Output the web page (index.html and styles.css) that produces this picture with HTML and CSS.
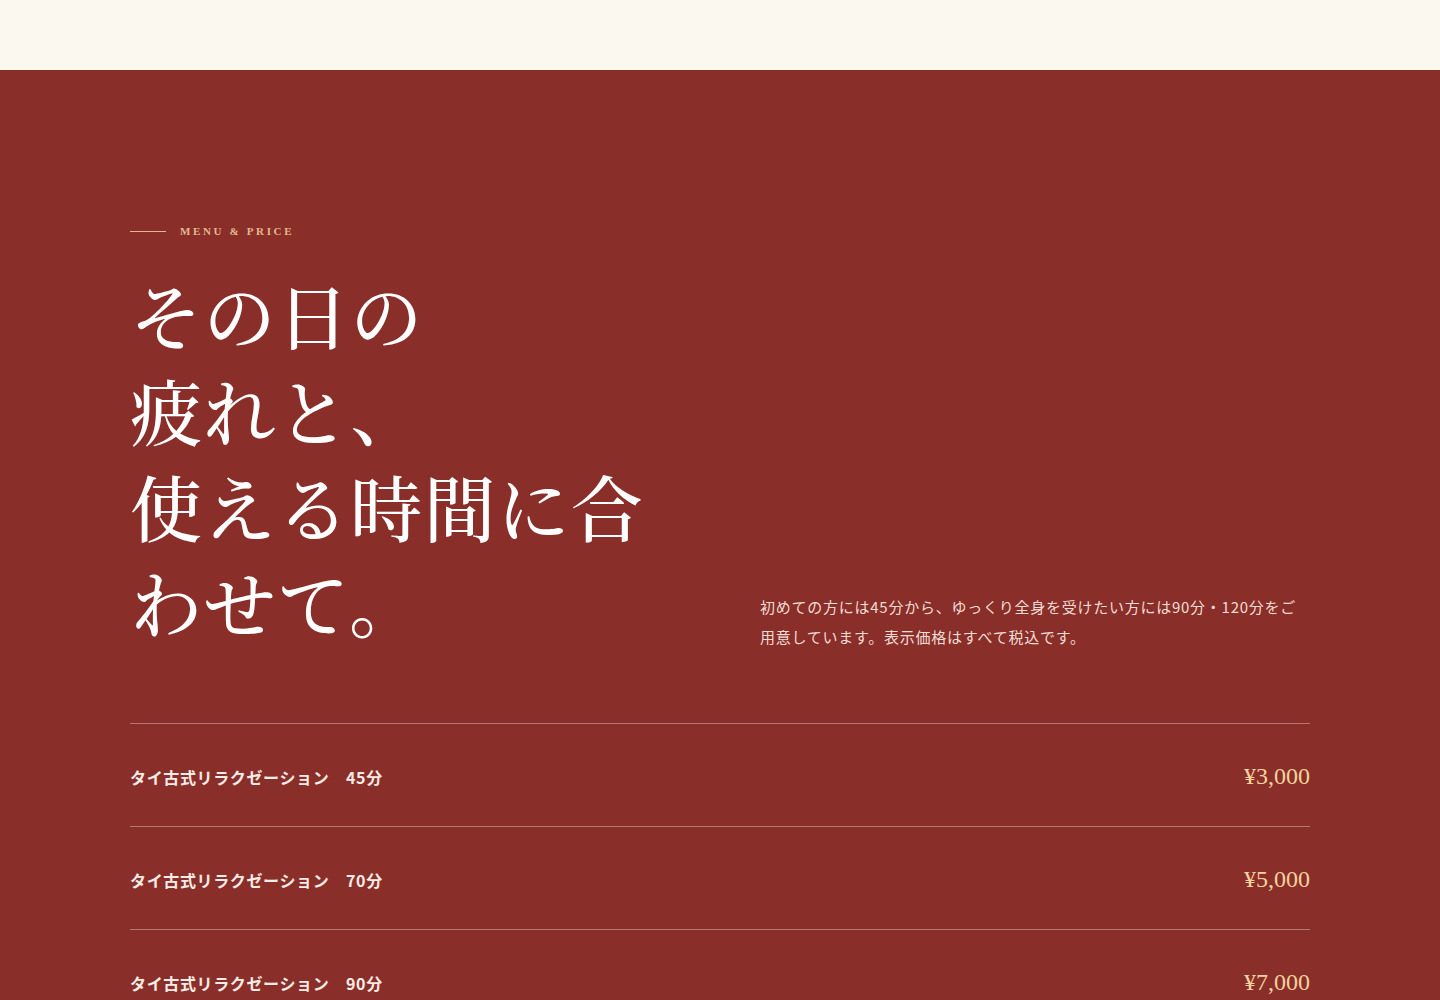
FILE: index.html
```html
<!DOCTYPE html>
<html lang="ja">
<head>
<meta charset="utf-8">
<title>Menu &amp; Price</title>
<link rel="stylesheet" href="styles.css">
</head>
<body>
<div class="top-strip"></div>
<section class="menu">
  <div class="inner">
    <div class="label"><span class="label-line"></span><span class="label-text">MENU &amp; PRICE</span></div>
    <div class="intro">
      <h2 class="heading">その日の<br>疲れと、<br>使える時間に合わせて。</h2>
      <p class="lead">初めての方には45分から、ゆっくり全身を受けたい方には90分・120分をご用意しています。表示価格はすべて税込です。</p>
    </div>
    <ul class="list">
      <li class="row"><span class="name">タイ古式リラクゼーション　45分</span><span class="price">¥3,000</span></li>
      <li class="row"><span class="name">タイ古式リラクゼーション　70分</span><span class="price">¥5,000</span></li>
      <li class="row"><span class="name">タイ古式リラクゼーション　90分</span><span class="price">¥7,000</span></li>
      <li class="row"><span class="name">タイ古式リラクゼーション　120分</span><span class="price">¥9,000</span></li>
    </ul>
  </div>
</section>
</body>
</html>
```

FILE: styles.css
```css
* { box-sizing: border-box; }
html, body { margin: 0; padding: 0; }
body {
  background: #8a2e2a;
  font-family: "Noto Sans CJK JP", "Noto Sans", sans-serif;
  color: #fff;
}
.top-strip {
  height: 70px;
  background: #fbf8f0;
}
.menu {
  background: #8a2e2a;
  padding: 153px 0 120px;
}
.inner {
  width: 1180px;
  margin: 0 auto;
}
.label {
  display: flex;
  align-items: center;
  gap: 14px;
  height: 16px;
}
.label-line {
  width: 36px;
  height: 1px;
  background: #e2b98c;
}
.label-text {
  font-family: "Liberation Serif", serif;
  font-size: 11px;
  letter-spacing: 0.24em;
  color: #e2b98c;
  font-weight: 700;
}
.intro {
  display: grid;
  grid-template-columns: 550px 550px;
  column-gap: 80px;
  align-items: end;
  margin-top: 26px;
}
.heading {
  margin: 0;
  font-family: "Noto Serif CJK JP", "Noto Serif JP", "Noto Sans CJK JP", serif;
  font-weight: 500;
  font-size: 72px;
  line-height: 96px;
  letter-spacing: 0.02em;
  color: #fff;
}
.lead {
  margin: 0 0 -3px;
  font-size: 15px;
  line-height: 30px;
  letter-spacing: 0.05em;
  color: #f1dcd3;
}
.list {
  list-style: none;
  margin: 74px 0 0;
  padding: 0;
  border-top: 1px solid rgba(255, 255, 255, 0.35);
}
.row {
  display: flex;
  justify-content: space-between;
  align-items: center;
  height: 103px;
  padding-top: 3px;
  border-bottom: 1px solid rgba(255, 255, 255, 0.35);
}
.name {
  font-size: 16px;
  font-weight: 700;
  letter-spacing: 0.04em;
  color: #f7ece6;
}
.price {
  font-family: "Liberation Serif", serif;
  font-size: 24px;
  color: #f3d29c;
}
```
